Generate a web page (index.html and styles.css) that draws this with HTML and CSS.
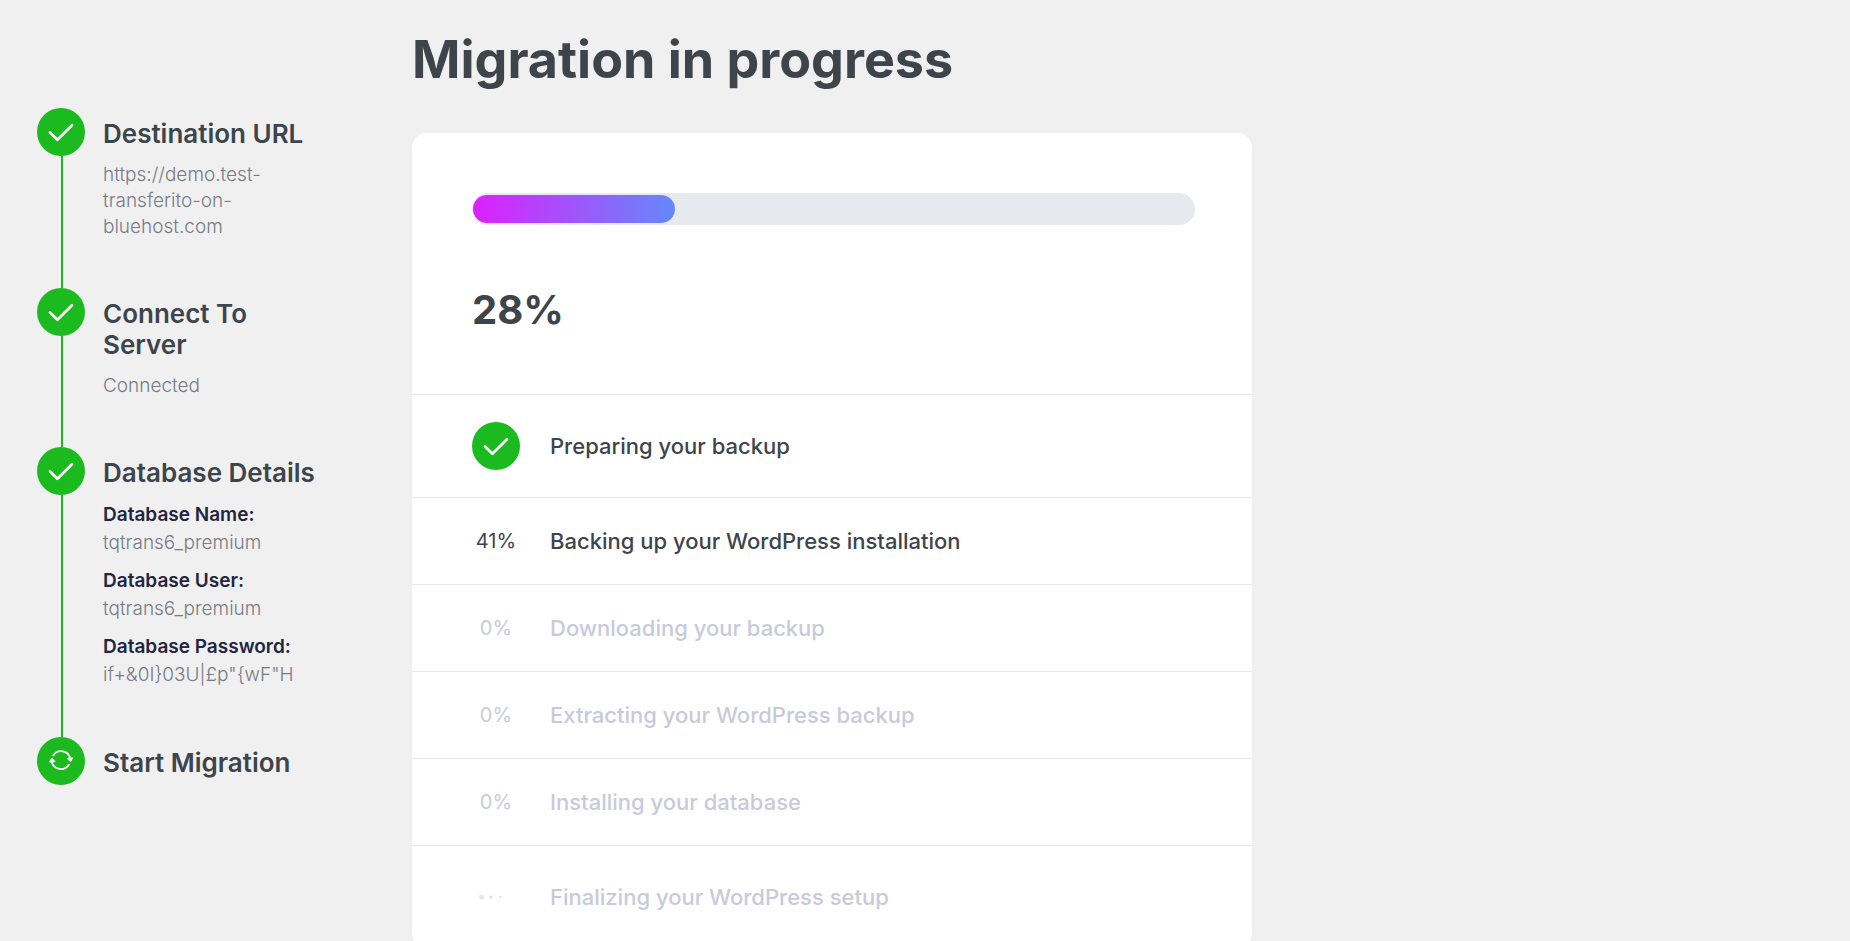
FILE: index.html
```html
<!DOCTYPE html>
<html lang="en">
<head>
    <meta charset="UTF-8">
    <meta name="viewport" content="width=device-width, initial-scale=1.0">
    <title>Migration in progress</title>
    <link rel="stylesheet" href="styles.css">
</head>
<body>

<svg class="sprite" aria-hidden="true">
    <symbol id="check" viewBox="0 0 48 48">
        <path d="M13 24.5l7.4 7.2L35 17.2" fill="none" stroke="#fff" stroke-width="2.7" stroke-linecap="round" stroke-linejoin="round"/>
    </symbol>
    <symbol id="sync" viewBox="0 0 48 48">
        <path d="M16.2 18.4A9.3 9.3 0 0 1 33.2 22M31.8 27.8A9.3 9.3 0 0 1 14.8 24.5" fill="none" stroke="#fff" stroke-width="1.8" stroke-linecap="round"/>
        <path d="M30.2 21.4l5.5-.5-2.2 3.8zM12.4 25l2.6-3.8 3.1 3.5z" fill="#fff" stroke="#fff" stroke-linejoin="round"/>
    </symbol>
</svg>

<div class="page">
    <aside class="steps">
        <div class="step">
            <div class="step_mark">
                <svg class="badge"><use href="#check"/></svg>
            </div>
            <div class="step_body">
                <h2>Destination URL</h2>
                <p>https://demo.test-<wbr>transferito-on-<wbr>bluehost.com</p>
            </div>
        </div>
        <div class="step">
            <div class="step_mark">
                <svg class="badge"><use href="#check"/></svg>
            </div>
            <div class="step_body">
                <h2>Connect To Server</h2>
                <p>Connected</p>
            </div>
        </div>
        <div class="step">
            <div class="step_mark">
                <svg class="badge"><use href="#check"/></svg>
            </div>
            <div class="step_body">
                <h2>Database Details</h2>
                <dl>
                    <dt>Database Name:</dt>
                    <dd>tqtrans6_premium</dd>
                    <dt>Database User:</dt>
                    <dd>tqtrans6_premium</dd>
                    <dt>Database Password:</dt>
                    <dd>if+&amp;0I}03U|£p"{wF"H</dd>
                </dl>
            </div>
        </div>
        <div class="step">
            <div class="step_mark">
                <svg class="badge"><use href="#sync"/></svg>
            </div>
            <div class="step_body">
                <h2>Start Migration</h2>
            </div>
        </div>
    </aside>

    <main class="content">
        <h1>Migration in progress</h1>

        <div class="card">
            <div class="summary">
                <div class="progress" role="progressbar" aria-valuenow="28" aria-valuemin="0" aria-valuemax="100" aria-label="Migration progress">
                    <div class="progress_fill" style="width: 28%"></div>
                </div>
                <div class="percent">28%</div>
            </div>
            <ul class="tasks">
                <li class="task">
                    <span class="task_status"><svg class="badge"><use href="#check"/></svg></span>
                    <span class="task_name">Preparing your backup</span>
                </li>
                <li class="task">
                    <span class="task_status">41%</span>
                    <span class="task_name">Backing up your WordPress installation</span>
                </li>
                <li class="task pending">
                    <span class="task_status">0%</span>
                    <span class="task_name">Downloading your backup</span>
                </li>
                <li class="task pending">
                    <span class="task_status">0%</span>
                    <span class="task_name">Extracting your WordPress backup</span>
                </li>
                <li class="task pending">
                    <span class="task_status">0%</span>
                    <span class="task_name">Installing your database</span>
                </li>
                <li class="task pending">
                    <span class="task_status">
                        <svg class="dots" viewBox="0 0 48 48">
                            <circle cx="9.5" cy="24" r="2.6" fill="#e6e7ef"/>
                            <circle cx="19" cy="24" r="1.6" fill="#dcdde3"/>
                            <circle cx="28.5" cy="24" r="1.1" fill="#d8d9df"/>
                        </svg>
                    </span>
                    <span class="task_name">Finalizing your WordPress setup</span>
                </li>
            </ul>
        </div>
    </main>
</div>

</body>
</html>
```
FILE: styles.css
```css
* {
  box-sizing: border-box;
}

body {
  margin: 0;
  background-color: #f0f0f0;
  font-family: Inter, sans-serif;
  color: #3d444b;
}

h1, h2, p, dl, dd, ul {
  margin: 0;
  padding: 0;
}

.sprite {
  display: none;
}

.page {
  display: flex;
  align-items: flex-start;
  gap: 92px;
  padding: 0 37px;
}

.badge {
  display: block;
  width: 48px;
  height: 48px;
  border-radius: 50%;
  background: #1bba1f;
}

/* left column */
.steps {
  width: 283px;
  flex-shrink: 0;
  padding-top: 108px;
}

.step {
  display: flex;
  gap: 18px;
}

.step_mark {
  display: flex;
  flex-direction: column;
  align-items: center;
}

.step:not(:last-child) .step_mark::after {
  content: "";
  flex: 1;
  width: 2px;
  margin-left: 2px;
  background: #1bba1f;
}

.step_body {
  flex: 1;
  padding: 10px 0 48px;
}

.step h2 {
  max-width: 212px;
  font-size: 26px;
  line-height: 31px;
  font-weight: 600;
}

.step p {
  margin-top: 13px;
  font-size: 19px;
  line-height: 26px;
  font-weight: 300;
  color: #777b84;
}

.step dl {
  padding-top: 13px;
  font-size: 19px;
  line-height: 28px;
}

.step dt {
  font-weight: 600;
  color: #23243f;
}

.step dd {
  font-weight: 300;
  color: #777b84;
}

.step dd:not(:last-child) {
  margin-bottom: 10px;
}

/* right column */
.content {
  flex: 1;
  max-width: 840px;
  padding-bottom: 40px;
}

h1 {
  padding: 30px 0 43px;
  font-size: 52px;
  line-height: 60px;
  font-weight: 700;
}

.card {
  background: #fff;
  border-radius: 15px;
}

.summary {
  padding: 60px 57px 60px 60px;
}

.progress {
  height: 32px;
  padding: 2px 1px;
  border-radius: 16px;
  background: #e8e9ef;
}

.progress_fill {
  height: 28px;
  border-radius: 14px;
  background: linear-gradient(90deg, #dd20ff, #628af8);
}

.percent {
  margin-top: 60px;
  font-size: 40px;
  line-height: 49px;
  font-weight: 700;
}

.tasks {
  list-style: none;
}

.task {
  display: flex;
  align-items: center;
  gap: 30px;
  padding: 27px 60px;
  border-top: 1px solid #e8e9ef;
  font-size: 22px;
  line-height: 32px;
  font-weight: 500;
}

.task_status {
  width: 48px;
  text-align: center;
  font-size: 20px;
  font-weight: 400;
}

.dots {
  display: block;
  width: 48px;
  height: 48px;
}

.pending {
  color: #c8cadb;
}
```
